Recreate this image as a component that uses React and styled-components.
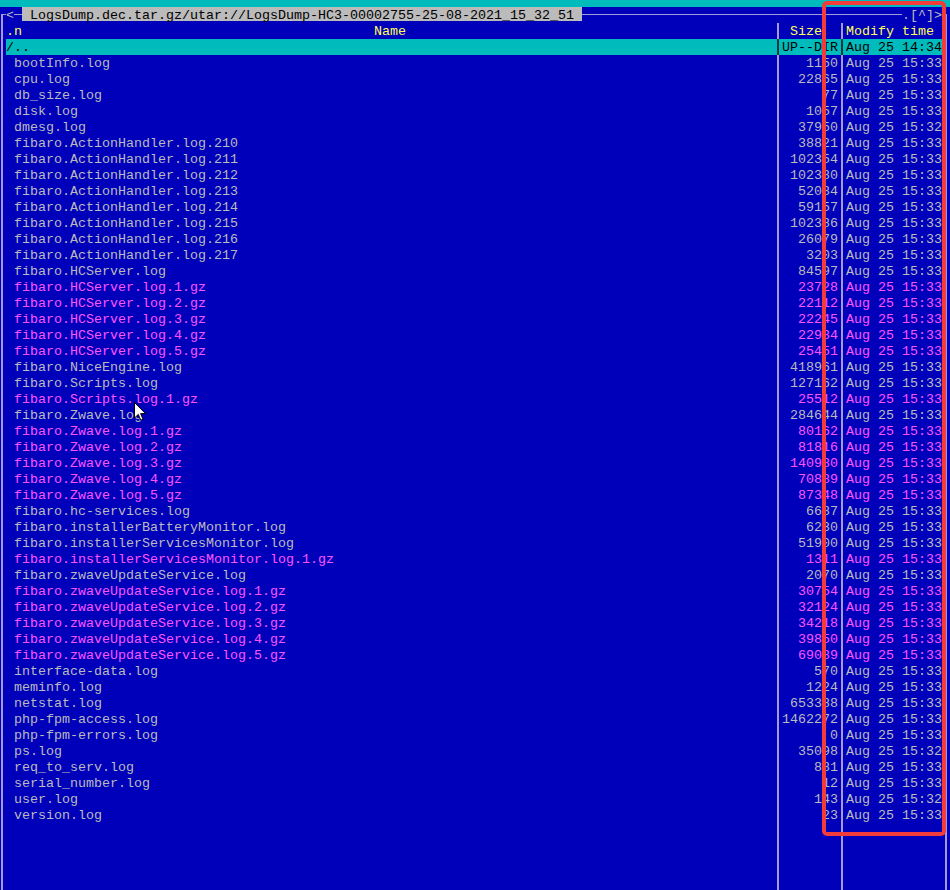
import React from "react";
import styled, { createGlobalStyle } from "styled-components";

const BLUE = "#0000bb";
const CYAN = "#00bbbb";
const GRAY = "#bbbbbb";
const LINE = "#a59ad8";
const PINK = "#ff55ff";
const YELLOW = "#ffff55";

const files = [
  ["bootInfo.log", "1150"],
  ["cpu.log", "22865"],
  ["db_size.log", "77"],
  ["disk.log", "1057"],
  ["dmesg.log", "37950", "15:32"],
  ["fibaro.ActionHandler.log.210", "38821"],
  ["fibaro.ActionHandler.log.211", "102354"],
  ["fibaro.ActionHandler.log.212", "102380"],
  ["fibaro.ActionHandler.log.213", "52084"],
  ["fibaro.ActionHandler.log.214", "59157"],
  ["fibaro.ActionHandler.log.215", "102386"],
  ["fibaro.ActionHandler.log.216", "26079"],
  ["fibaro.ActionHandler.log.217", "3203"],
  ["fibaro.HCServer.log", "84597"],
  ["fibaro.HCServer.log.1.gz", "23728"],
  ["fibaro.HCServer.log.2.gz", "22112"],
  ["fibaro.HCServer.log.3.gz", "22245"],
  ["fibaro.HCServer.log.4.gz", "22984"],
  ["fibaro.HCServer.log.5.gz", "25451"],
  ["fibaro.NiceEngine.log", "418961"],
  ["fibaro.Scripts.log", "127162"],
  ["fibaro.Scripts.log.1.gz", "25512"],
  ["fibaro.Zwave.log", "284644"],
  ["fibaro.Zwave.log.1.gz", "80162"],
  ["fibaro.Zwave.log.2.gz", "81816"],
  ["fibaro.Zwave.log.3.gz", "140980"],
  ["fibaro.Zwave.log.4.gz", "70889"],
  ["fibaro.Zwave.log.5.gz", "87348"],
  ["fibaro.hc-services.log", "6687"],
  ["fibaro.installerBatteryMonitor.log", "6230"],
  ["fibaro.installerServicesMonitor.log", "51900"],
  ["fibaro.installerServicesMonitor.log.1.gz", "1311"],
  ["fibaro.zwaveUpdateService.log", "2070"],
  ["fibaro.zwaveUpdateService.log.1.gz", "30754"],
  ["fibaro.zwaveUpdateService.log.2.gz", "32124"],
  ["fibaro.zwaveUpdateService.log.3.gz", "34218"],
  ["fibaro.zwaveUpdateService.log.4.gz", "39850"],
  ["fibaro.zwaveUpdateService.log.5.gz", "69089"],
  ["interface-data.log", "570"],
  ["meminfo.log", "1224"],
  ["netstat.log", "653388"],
  ["php-fpm-access.log", "1462272"],
  ["php-fpm-errors.log", "0"],
  ["ps.log", "35098", "15:32"],
  ["req_to_serv.log", "881"],
  ["serial_number.log", "12"],
  ["user.log", "143", "15:32"],
  ["version.log", "23"],
];

const vline = (color, at) =>
  `linear-gradient(to right, transparent ${at}px, ${color} ${at}px, ${color} ${at + 2}px, transparent ${at + 2}px)`;

export default function App() {
  return (
    <Screen>
      <GlobalStyle />
      <MenuStrip />
      <Panel>
        <TitleBar>
          <CornerLeft />
          <Glyph>&lt;</Glyph>
          <Dash />
          <Title> LogsDump.dec.tar.gz/utar://LogsDump-HC3-00002755-25-08-2021_15_32_51 </Title>
          <Rule />
          <Glyph>.[^]&gt;</Glyph>
          <CornerRight />
        </TitleBar>

        <Row>
          <Edge $at={1} />
          <HeaderName>
            <span>.n</span>
            <span>Name</span>
            <span />
          </HeaderName>
          <Sep />
          <Cell $color={YELLOW}> Size</Cell>
          <Sep />
          <Cell $color={YELLOW}>Modify time</Cell>
          <Edge $at={3} />
        </Row>

        <Row>
          <Edge $at={1} />
          <Cell $selected>/..</Cell>
          <Sep $selected />
          <Cell $selected $align="right">UP--DIR</Cell>
          <Sep $selected />
          <Cell $selected>Aug 25 14:34</Cell>
          <Edge $at={3} />
        </Row>

        {files.map(([name, size, time = "15:33"]) => {
          const tone = name.endsWith(".gz") ? PINK : GRAY;
          return (
            <Row key={name}>
              <Edge $at={1} />
              <Cell $color={tone}>{" " + name}</Cell>
              <Sep />
              <Cell $color={tone} $align="right">{size}</Cell>
              <Sep />
              <Cell $color={tone}>{"Aug 25 " + time}</Cell>
              <Edge $at={3} />
            </Row>
          );
        })}

        <Filler>
          <Edge $at={1} />
          <div />
          <Sep />
          <div />
          <Sep />
          <div />
          <Edge $at={3} />
        </Filler>
      </Panel>

      <Annotation />
      <Pointer viewBox="0 0 12 19" width="12" height="19">
        <path
          d="M0.5 0.5 L0.5 16 L4.3 12.4 L6.8 18.2 L9 17.2 L6.6 11.6 L11.5 11.6 Z"
          fill="#ffffff"
          stroke="#000000"
          strokeWidth="1"
          strokeLinejoin="miter"
        />
      </Pointer>
    </Screen>
  );
}

const GlobalStyle = createGlobalStyle`
  html, body {
    margin: 0;
    padding: 0;
    background: ${BLUE};
  }
  body {
    font-family: "Liberation Mono", "Courier New", monospace;
    font-size: 13.3333px;
    line-height: 18px;
  }
`;

const Screen = styled.div`
  position: relative;
  width: 950px;
  height: 890px;
  overflow: hidden;
  background: ${BLUE};
`;

const MenuStrip = styled.div`
  height: 7px;
  background: ${CYAN};
`;

const Panel = styled.div`
  display: flex;
  flex-direction: column;
  height: 883px;
`;

const TitleBar = styled.div`
  display: flex;
  height: 16px;
  color: ${GRAY};
  white-space: pre;
  background: linear-gradient(
    to bottom,
    transparent 7px,
    ${LINE} 7px,
    ${LINE} 8px,
    transparent 8px
  );
`;

const CornerLeft = styled.div`
  width: 6px;
  background:
    linear-gradient(${LINE}, ${LINE}) 1px 7px / 2px 9px no-repeat,
    linear-gradient(${LINE}, ${LINE}) 1px 7px / 5px 1px no-repeat;
  background-color: ${BLUE};
`;

const CornerRight = styled.div`
  width: 8px;
  background:
    linear-gradient(${LINE}, ${LINE}) 3px 7px / 2px 9px no-repeat,
    linear-gradient(${LINE}, ${LINE}) 0 7px / 5px 1px no-repeat;
  background-color: ${BLUE};
`;

const Glyph = styled.span`
  height: 16px;
  background: ${BLUE};
  color: ${GRAY};
`;

const Dash = styled.span`
  width: 8px;
`;

const Rule = styled.span`
  flex: 1;
`;

const Title = styled.span`
  height: 14px;
  background: ${GRAY};
  color: #000;
`;

const Row = styled.div`
  display: grid;
  grid-template-columns: 6px 768px 8px 56px 8px 96px 8px;
  height: 16px;
  flex-shrink: 0;
`;

const Filler = styled(Row)`
  height: auto;
  flex: 1;
`;

const Edge = styled.div`
  background: ${(p) => vline(LINE, p.$at)};
`;

const Sep = styled.div`
  background: ${(p) =>
    p.$selected ? `${vline("#00393f", 3)}, ${CYAN}` : vline(LINE, 3)};
`;

const Cell = styled.div`
  height: 16px;
  white-space: pre;
  overflow: hidden;
  text-align: ${(p) => p.$align || "left"};
  color: ${(p) => (p.$selected ? "#000" : p.$color || GRAY)};
  background: ${(p) => (p.$selected ? CYAN : "transparent")};
`;

const HeaderName = styled.div`
  display: grid;
  grid-template-columns: 1fr auto 1fr;
  height: 16px;
  overflow: hidden;
  color: ${YELLOW};
  white-space: pre;
`;

const Annotation = styled.div`
  position: absolute;
  left: 822px;
  top: 1px;
  width: 124px;
  height: 835px;
  box-sizing: border-box;
  border: 4px solid #f23b3b;
  border-radius: 5px;
  pointer-events: none;
`;

const Pointer = styled.svg`
  position: absolute;
  left: 134px;
  top: 402px;
  pointer-events: none;
`;
